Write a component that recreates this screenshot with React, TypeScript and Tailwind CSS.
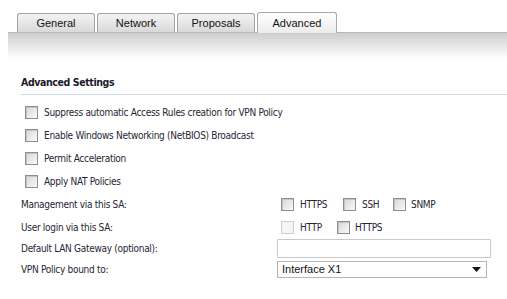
import React from 'react';

const font = { fontFamily: '"DejaVu Sans Condensed", "Liberation Sans", Arial, sans-serif' };
const arial = { fontFamily: '"Liberation Sans", Arial, sans-serif' };

function Box({ disabled = false }: { disabled?: boolean }) {
  return (
    <span
      className={
        disabled
          ? 'inline-block w-[13px] h-[13px] border border-[#cfcfcf] bg-[#f5f5f5] shrink-0'
          : 'inline-block w-[13px] h-[13px] border border-[#8e8e8e] bg-gradient-to-br from-[#d6d6d6] to-[#fafafa] shadow-[inset_1px_1px_0_#c4c4c4] shrink-0'
      }
    />
  );
}

function Tab({ label, active = false }: { label: string; active?: boolean }) {
  return (
    <div
      style={arial}
      className={
        active
          ? 'w-[80px] h-[21px] -mb-px rounded-t-[3px] border border-b-0 border-[#a9a9a9] bg-gradient-to-b from-white to-[#ececec] flex items-center justify-center text-[11px] text-[#111] z-10'
          : 'w-[78px] h-[19px] rounded-t-[3px] border border-b-0 border-[#a3a3a3] bg-gradient-to-b from-[#f3f3f3] to-[#d9d9d9] flex items-center justify-center text-[11px] text-[#111]'
      }
    >
      {label}
    </div>
  );
}

function CheckRow({ label }: { label: string }) {
  return (
    <div className="flex items-center h-[23px] pl-[4px] gap-[6px]">
      <Box />
      <span>{label}</span>
    </div>
  );
}

export default function App() {
  return (
    <div className="w-[507px] h-[299px] bg-white text-[10px] tracking-[-0.3px] text-[#262633] overflow-hidden" style={font}>
      <div className="flex items-end gap-[2px] pl-[17px] pt-[12px] tracking-normal">
        <Tab label="General" />
        <Tab label="Network" />
        <Tab label="Proposals" />
        <Tab label="Advanced" active />
      </div>
      <div className="ml-[8px] h-[26px] border-t border-[#b9b9b9] bg-gradient-to-b from-[#cdcdcd] to-white" />

      <div className="pl-[21px] pt-[17px]">
        <div className="font-bold text-[10.5px] tracking-[-0.4px] text-[#1a1a2a] pb-[3px] border-b border-[#cbd9e6]">Advanced Settings</div>
        <div className="pt-[6px]">
          <CheckRow label="Suppress automatic Access Rules creation for VPN Policy" />
          <CheckRow label="Enable Windows Networking (NetBIOS) Broadcast" />
          <CheckRow label="Permit Acceleration" />
          <CheckRow label="Apply NAT Policies" />
        </div>

        <div className="flex items-center h-[23px]">
          <span className="w-[260px]">Management via this SA:</span>
          <div className="flex items-center">
            <Box />
            <span className="ml-[6px] w-[43px]">HTTPS</span>
            <Box />
            <span className="ml-[6px] w-[31px]">SSH</span>
            <Box />
            <span className="ml-[5px]">SNMP</span>
          </div>
        </div>
        <div className="flex items-center h-[23px]">
          <span className="w-[260px]">User login via this SA:</span>
          <div className="flex items-center">
            <Box disabled />
            <span className="ml-[6px] w-[37px]">HTTP</span>
            <Box />
            <span className="ml-[5px]">HTTPS</span>
          </div>
        </div>
        <div className="flex items-center h-[19px]">
          <span className="w-[256px]">Default LAN Gateway (optional):</span>
          <div className="w-[214px] h-[19px] border border-[#c8c8c8] rounded-[1px] bg-white" />
        </div>
        <div className="flex items-center h-[17px] mt-[3px]">
          <span className="w-[256px]">VPN Policy bound to:</span>
          <div className="w-[210px] h-[17px] border border-[#b5b5b5] bg-white flex items-center justify-between pl-[4px] pr-[5px] text-[#111] tracking-normal" style={arial}>
            <span className="text-[11px]">Interface X1</span>
            <svg width="9" height="5" viewBox="0 0 9 5"><path d="M0 0h9L4.5 5z" fill="#111" /></svg>
          </div>
        </div>
      </div>
    </div>
  );
}
